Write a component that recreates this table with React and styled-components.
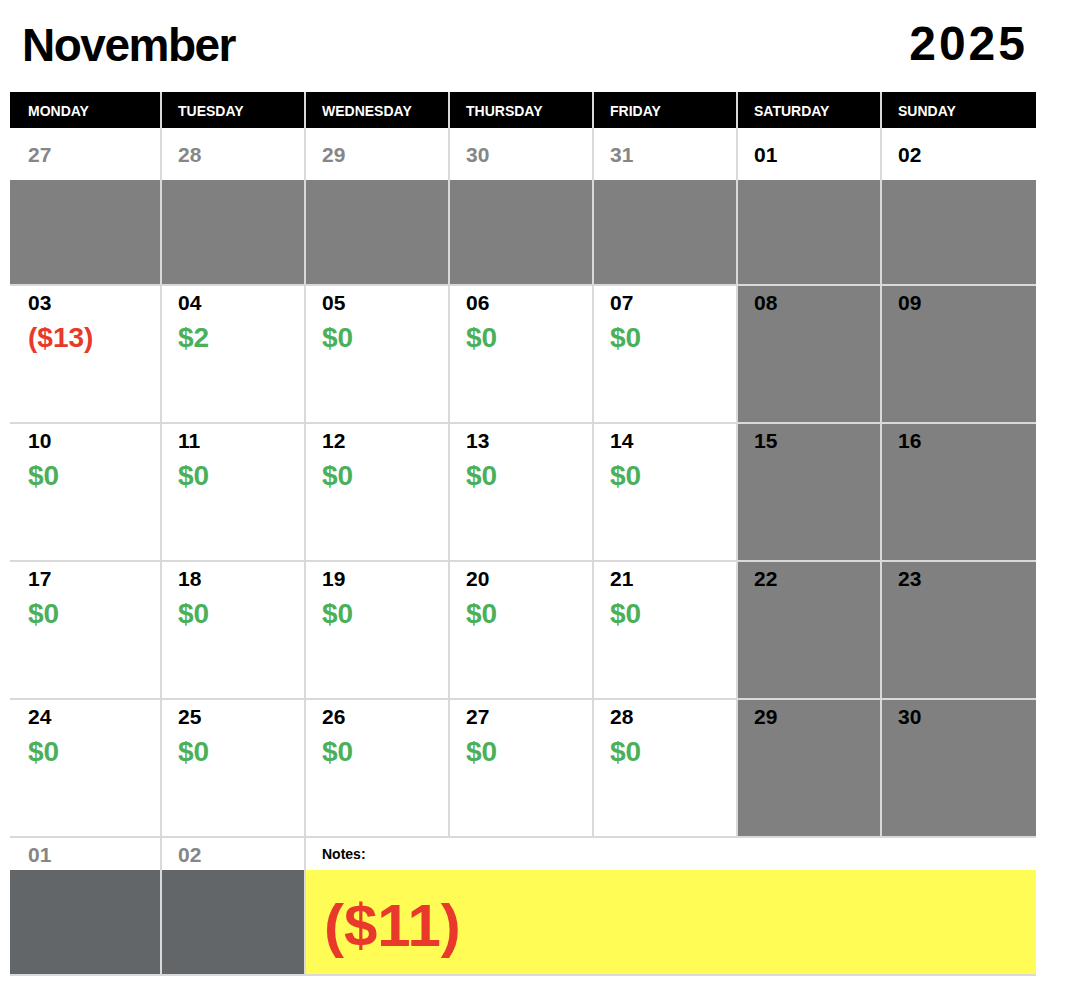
import React from 'react';
import styled, { createGlobalStyle } from 'styled-components';

const GlobalStyle = createGlobalStyle`
  body {
    margin: 0;
    background: #ffffff;
    font-family: "Liberation Sans", Arial, sans-serif;
  }
`;

const COLUMNS = '150px repeat(5, 142px) 154px';
const LINE = '#d9d9d9';

const Page = styled.div`
  width: 1026px;
  padding-left: 10px;
`;

const TitleBar = styled.div`
  display: flex;
  justify-content: space-between;
  align-items: flex-start;
  height: 92px;
  box-sizing: border-box;
  padding: 22px 11px 0 12px;
`;

const Month = styled.h1`
  margin: 0;
  font-size: 46px;
  line-height: 1;
  font-weight: 700;
  letter-spacing: -1.5px;
  color: #000;
`;

const Year = styled.div`
  font-size: 48px;
  line-height: 1;
  font-weight: 700;
  letter-spacing: 3px;
  margin-right: -3px;
  margin-top: -2px;
  color: #000;
`;

const Row = styled.div`
  display: grid;
  grid-template-columns: ${COLUMNS};
  column-gap: 2px;
  background: ${LINE};
  border-top: ${p => (p.$divider ? `2px solid ${LINE}` : 'none')};
  border-bottom: ${p => (p.$closing ? `2px solid ${LINE}` : 'none')};
`;

const HeadCell = styled.div`
  height: 36px;
  box-sizing: border-box;
  padding: 2px 0 0 ${p => (p.$first ? 18 : 16)}px;
  background: #000;
  color: #fff;
  font-size: 14px;
  line-height: 34px;
  font-weight: 700;
  text-transform: uppercase;
`;

const LeadCell = styled.div`
  display: flex;
  flex-direction: column;
  background: #fff;
`;

const DateNum = styled.div`
  box-sizing: border-box;
  height: ${p => p.$height}px;
  padding: ${p => p.$top}px 0 0 ${p => (p.$first ? 18 : 16)}px;
  font-size: 21px;
  line-height: 24px;
  font-weight: 700;
  color: ${p => (p.$muted ? '#868686' : '#000')};
`;

const Filler = styled.div`
  height: 104px;
  background: ${p => (p.$dark ? '#636669' : '#808080')};
`;

const DayCell = styled.div`
  height: 136px;
  background: ${p => (p.$weekend ? '#808080' : '#fff')};
`;

const Amount = styled.div`
  margin-top: 7px;
  padding-left: ${p => (p.$first ? 18 : 16)}px;
  font-size: 28px;
  line-height: 32px;
  font-weight: 700;
  color: ${p => (p.$negative ? '#e8392b' : '#4caf5a')};
`;

const NotesCell = styled.div`
  grid-column: span 5;
  display: flex;
  flex-direction: column;
  background: #fff;
`;

const NotesLabel = styled.div`
  height: 32px;
  box-sizing: border-box;
  padding: 8px 0 0 16px;
  font-size: 14px;
  line-height: 16px;
  font-weight: 700;
  color: #000;
`;

const Total = styled.div`
  height: 104px;
  box-sizing: border-box;
  padding: 8px 0 0 18px;
  background: #fffd55;
  color: #e8392b;
  font-size: 60px;
  line-height: 96px;
  font-weight: 700;
`;

const dayNames = ['Monday', 'Tuesday', 'Wednesday', 'Thursday', 'Friday', 'Saturday', 'Sunday'];

const leadDays = [
  { d: '27', muted: true },
  { d: '28', muted: true },
  { d: '29', muted: true },
  { d: '30', muted: true },
  { d: '31', muted: true },
  { d: '01' },
  { d: '02' },
];

const weeks = [
  [['03', -13], ['04', 2], ['05', 0], ['06', 0], ['07', 0], ['08'], ['09']],
  [['10', 0], ['11', 0], ['12', 0], ['13', 0], ['14', 0], ['15'], ['16']],
  [['17', 0], ['18', 0], ['19', 0], ['20', 0], ['21', 0], ['22'], ['23']],
  [['24', 0], ['25', 0], ['26', 0], ['27', 0], ['28', 0], ['29'], ['30']],
];

const money = v => (v < 0 ? `($${Math.abs(v)})` : `$${v}`);

export default function App() {
  return (
    <Page>
      <GlobalStyle />
      <TitleBar>
        <Month>November</Month>
        <Year>2025</Year>
      </TitleBar>

      <Row>
        {dayNames.map((n, i) => (
          <HeadCell key={n} $first={i === 0}>{n}</HeadCell>
        ))}
      </Row>

      <Row>
        {leadDays.map((day, i) => (
          <LeadCell key={day.d}>
            <DateNum $height={52} $top={15} $first={i === 0} $muted={day.muted}>{day.d}</DateNum>
            <Filler />
          </LeadCell>
        ))}
      </Row>

      {weeks.map((week, w) => (
        <Row key={w} $divider>
          {week.map(([d, amt], i) => (
            <DayCell key={d} $weekend={i > 4}>
              <DateNum $height={29} $top={5} $first={i === 0}>{d}</DateNum>
              {amt !== undefined && (
                <Amount $first={i === 0} $negative={amt < 0}>{money(amt)}</Amount>
              )}
            </DayCell>
          ))}
        </Row>
      ))}

      <Row $divider $closing>
        {['01', '02'].map((d, i) => (
          <LeadCell key={d}>
            <DateNum $height={32} $top={5} $first={i === 0} $muted>{d}</DateNum>
            <Filler $dark />
          </LeadCell>
        ))}
        <NotesCell>
          <NotesLabel>Notes:</NotesLabel>
          <Total>{money(-11)}</Total>
        </NotesCell>
      </Row>
    </Page>
  );
}
